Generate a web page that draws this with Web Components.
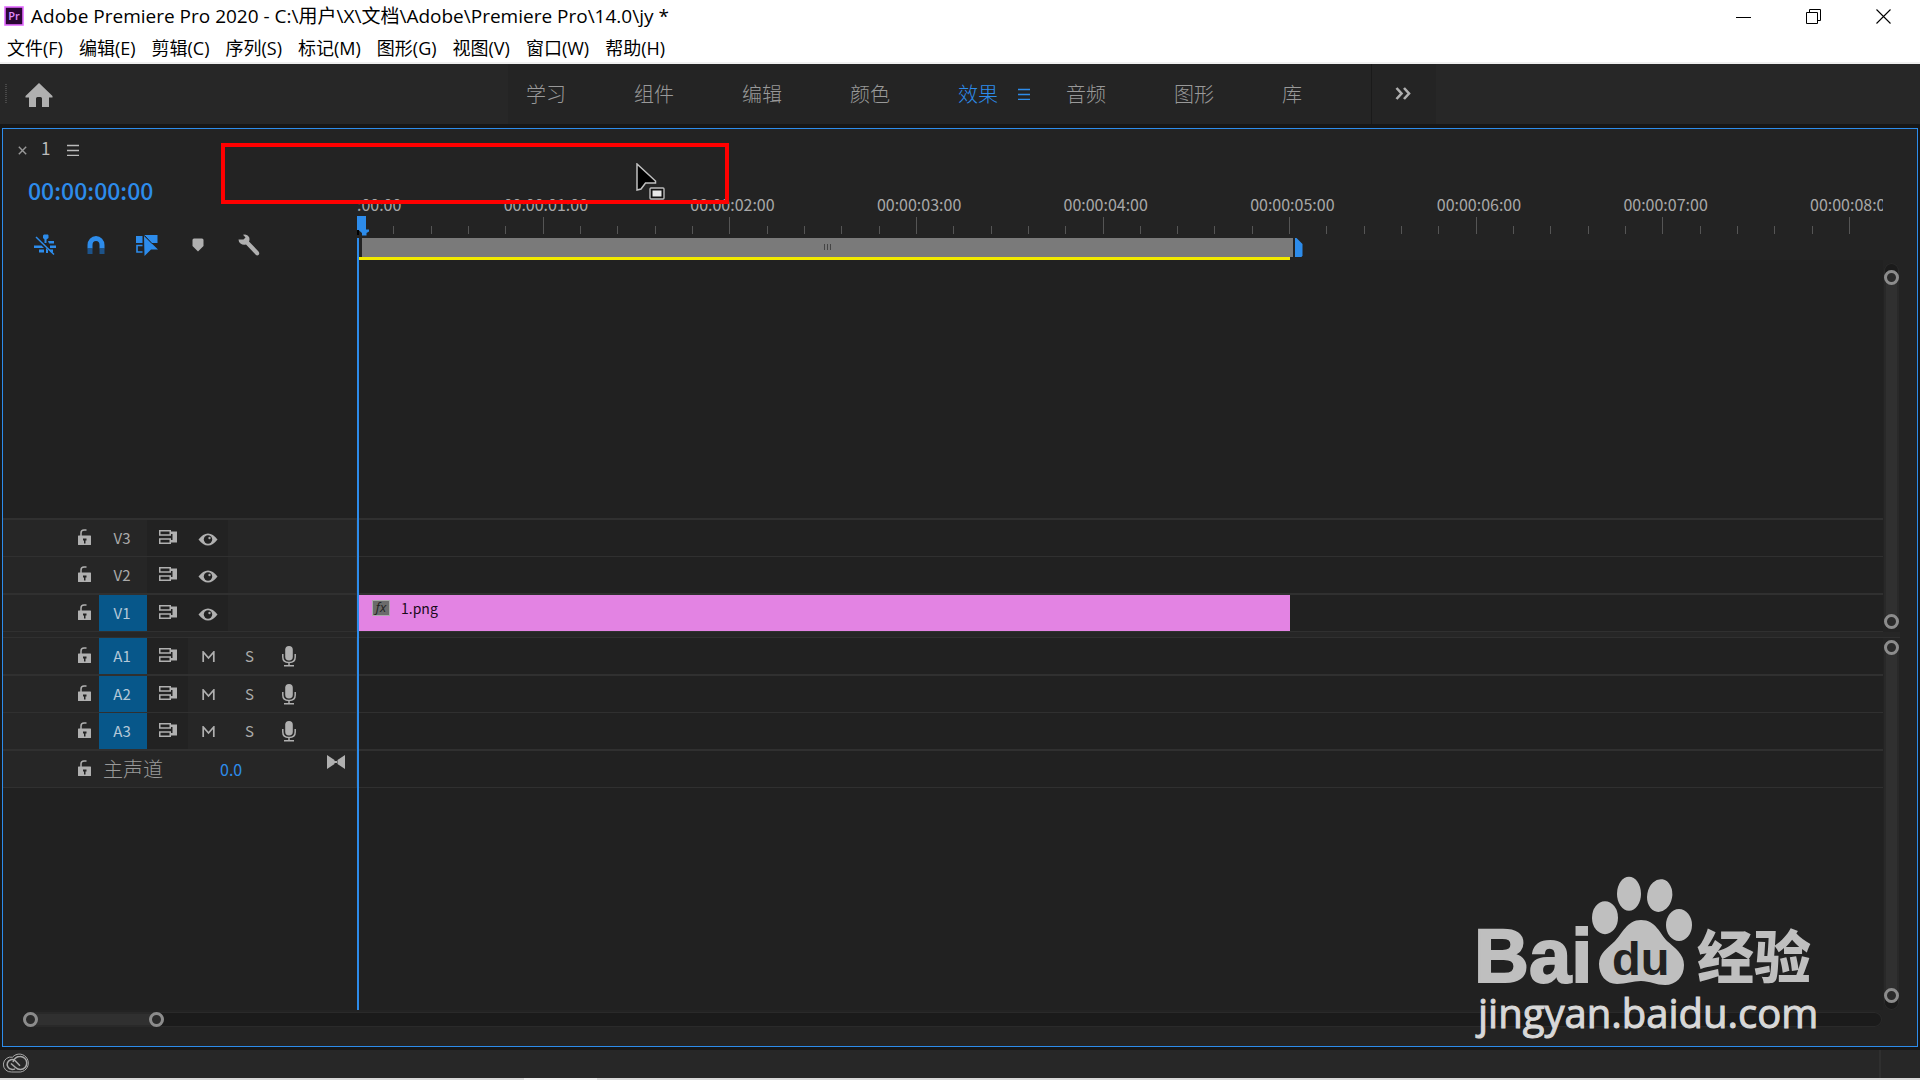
<!DOCTYPE html>
<html lang="zh-CN">
<head>
<meta charset="utf-8">
<title>Adobe Premiere Pro 2020</title>
<style>
html,body{margin:0;height:100%;background:#171717;overflow:hidden}
body{font-family:"Noto Sans CJK SC",sans-serif;color:#aaa}
</style>
</head>
<body>
<premiere-app></premiere-app>
<script>
const BASE = `<style>
*{box-sizing:border-box}
button{all:unset;box-sizing:border-box;cursor:default;white-space:nowrap}
svg{display:block}
</style>`;
function define(name, html, setup) {
  customElements.define(name, class extends HTMLElement {
    constructor() {
      super();
      this.attachShadow({mode: 'open'});
    }
    connectedCallback() {
      this.shadowRoot.innerHTML = BASE + (typeof html === 'function' ? html(this) : html);
      if (setup) setup(this);
    }
  });
}

/* Icons: [width, height, markup] */
const ICONS = {
  app: [20, 20, '<rect x="1" y="1" width="18" height="18" fill="#2a0634" stroke="#e36bff" stroke-width="1.6"/><text x="10" y="14" text-anchor="middle" font-family="Open Sans,sans-serif" font-weight="600" font-size="11" fill="#e08cff">Pr</text>'],
  min: [16, 16, '<path d="M0 8.500H15" stroke="#000"/>'],
  restore: [16, 16, '<path d="M.5 3.500H11.500V14.500H.500ZM3.500 3.500V.500H14.500V11.500H11.500" fill="none" stroke="#000"/>'],
  close: [16, 16, '<path d="M.5.500L14.500 14.500M14.500.500L.500 14.500" stroke="#000" stroke-width="1.100"/>'],
  home: [28, 24, '<path d="M14 0L27.500 13V14.500H24V24H17V15.500Q17 14 15.500 14H12.500Q11 14 11 15.500V24H4V14.500H.500V13Z" fill="#b0b0b0"/>'],
  more: [16, 13, '<path d="M1.500 1L6.500 6.500L1.500 12M9 1L14 6.500L9 12" fill="none" stroke="#b0b0b0" stroke-width="2.600"/>'],
  menu: [12, 12, '<path d="M0 1.500H12M0 6.500H12M0 11.500H12" stroke="currentColor" stroke-width="1.300"/>'],
  x: [9, 9, '<path d="M.8.800L8.200 8.200M8.200.800L.800 8.200" stroke="#999" stroke-width="1.400"/>'],
  nest: [22, 22, '<g fill="#2d8ceb"><path d="M9 1.500L10 .5H14L14.500 1.500V4L12.500 5.500V9H10.500V5.500L9 4ZM14 7H20V9.500H15ZM16 11.500H22V14H16ZM0 11.500H7.500L10 14H0ZM5 15.500H10V18.500H5ZM12 14L14 16V19H12Z"/><path d="M15 15.500H19V18.500H17Z"/></g><path d="M2 3L20 20.500" stroke="#2d8ceb" stroke-width="1.500"/>'],
  magnet: [18, 18, '<path d="M3 12.500V9A6 6.500 0 0 1 15 9V12.500" fill="none" stroke="#2d8ceb" stroke-width="5"/><path d="M.5 12.500H5.500V18H.500ZM12.500 12.500H17.500V18H12.500Z" fill="#1d5389"/>'],
  linked: [22, 21, '<path d="M0 1H6.500V8H0ZM8 0H21.500V8H15Z" fill="#2d8ceb"/><path d="M6.500 10.500H1V17H6.500" fill="none" stroke="#2d8ceb" stroke-width="1.600"/><path d="M8 1L22 14.500H15L8.500 21Z" fill="#2d8ceb"/><path d="M8.500.500L16 8.500" stroke="#222" stroke-width="1"/>'],
  marker: [12, 14, '<path d="M.5 2Q.500.500 2 .500H10Q11.500.500 11.500 2V8L6 13.500L.500 8Z" fill="#b0b0b0"/>'],
  wrench: [22, 22, '<path d="M5 .8Q9-.6 11 3Q12 5 11 7.500L20.500 17.500Q22 19.500 20.500 21Q19 22 17.500 20.500L8 10.500Q5 11.500 2.500 9.500Q.500 8 .5 5.500H5.500L7.500 3.500Z" fill="#b0b0b0"/>'],
  lock: [14, 16, '<path d="M3 7V4Q3 1 6 1H8.500" fill="none" stroke="#b0b0b0" stroke-width="1.500"/><rect x="0" y="6.500" width="13" height="9.500" rx=".6" fill="#b0b0b0"/><path d="M5 9.500H8.500V11.500H7.500V14.500H6V11.500H5Z" fill="#222"/>'],
  sync: [18, 14, '<path d="M.750.750H11.250V5H.750ZM.750 9H11.250V13.250H.750Z" fill="none" stroke="#b0b0b0" stroke-width="1.500"/><path d="M11.500 1.500H18V12.500H11.500V10H13.500V4H11.500Z" fill="#b0b0b0"/>'],
  eye: [20, 13, '<path d="M.5 6.500Q5 .5 10 .5T19.500 6.500Q15 12.500 10 12.500T.5 6.500Z" fill="#b0b0b0"/><circle cx="10" cy="6.500" r="4.200" fill="#222"/><circle cx="11.500" cy="5" r="1.200" fill="#aaa"/>'],
  mute: [13, 11, '<path d="M1.200 11V1L6.500 7L11.800 1V11" fill="none" stroke="#b0b0b0" stroke-width="1.700"/>'],
  mic: [14, 21, '<rect x="3.200" y="0" width="7.600" height="14.500" rx="3.800" fill="#b0b0b0"/><path d="M.8 8V11Q.800 16.500 7 16.500T13.200 11V8M7 16.500V19.500M2 19.800H12" fill="none" stroke="#b0b0b0" stroke-width="1.500"/>'],
  bowtie: [18, 14, '<path d="M0 0L7.500 5V9L0 14ZM18 0L10.500 5V9L18 14ZM7 6H11V8H7Z" fill="#b0b0b0"/>'],
  cc: [26, 20, '<g fill="none" stroke="#aaa"><path d="M8.500 19H17.500A9 9 0 1 0 9.500 4.200A7.500 7.500 0 1 0 8.500 19Z"/><path d="M12 15.800Q10 16.800 8.500 16.300A4.900 4.900 0 1 1 12 7.500L17 12.800M10 9Q12 3.500 17 3.500A6.500 6.500 0 0 1 17.500 16.500Q14.500 16.500 12.500 14.500L8 10.500" stroke-width="1.500"/></g>'],
  handleEnd: [8, 19, '<path d="M0 0H1.500L7.500 6V17.500L6.500 19H0Z" fill="#2d8ceb"/>'],
  playhead: [12, 20, '<path d="M0 0H9V13.500H12V15.500L9.500 17V19.500H5V17L1.500 14H0Z" fill="#2d8ceb"/><path d="M0 14H2V19H0Z" fill="#000"/>'],
  cursor: [32, 38, '<path d="M1 1V27L5 26L9.500 20H19.500V18Z" fill="#000" stroke="#c0c0c0" stroke-width="1.500"/><rect x="14" y="25" width="14" height="11" rx="1" fill="#111" stroke="#bbb" stroke-width="1.400"/><rect x="16.500" y="27.500" width="9" height="6" fill="#e8e8e8"/>']
};
define('pr-icon', el => {
  const [w, h, m] = ICONS[el.getAttribute('name')];
  return `<style>:host{display:block;flex:none}</style><svg width="${w}" height="${h}" viewBox="0 0 ${w} ${h}" aria-hidden="true">${m}</svg>`;
});

define('window-title', `<style>
:host{display:flex;height:34px;background:#fff;color:#000;font:19px/28px "Open Sans","Noto Sans CJK SC",sans-serif}
.name{flex:1;display:flex;align-items:center;gap:7px;padding:0 0 2px 4px}
.ctl{display:flex;padding-right:1px}
.ctl button{width:70px;display:flex;align-items:center;justify-content:center}
</style>
<div class="name"><pr-icon name="app"></pr-icon><span><slot></slot></span></div>
<div class="ctl"><button aria-label="最小化"><pr-icon name="min"></pr-icon></button><button aria-label="还原"><pr-icon name="restore"></pr-icon></button><button aria-label="关闭"><pr-icon name="close"></pr-icon></button></div>`);

define('menu-bar', `<style>
:host{display:block;background:#fff;color:#000;border-bottom:2px solid #f0f0f0;font:18px/28px "Open Sans","Noto Sans CJK SC",sans-serif}
nav{display:flex;gap:16px;height:28px;padding-left:7px}
</style><nav>${['文件(F)','编辑(E)','剪辑(C)','序列(S)','标记(M)','图形(G)','视图(V)','窗口(W)','帮助(H)'].map(t => `<button>${t}</button>`).join('')}</nav>`);

define('workspace-tab', el => `<style>
:host{display:flex;flex:none;width:108px;align-items:center}
button{width:60px;font-size:20px;line-height:28px;font-weight:300;color:#999}
:host([active]) button,:host([active]){color:#2d8ceb}
</style><button><slot></slot></button>${el.hasAttribute('active') ? '<pr-icon name="menu"></pr-icon>' : ''}`);

define('workspace-bar', `<style>
:host{display:flex;height:60px;background:#272727}
.left{width:508px;display:flex;align-items:center;gap:18px;padding-left:5px}
.grip{width:2px;height:20px;background:repeating-linear-gradient(#484848 0 1px,transparent 1px 2px)}
.left button{padding-top:2px}
.tabs{display:flex;width:864px;background:#242424;padding-left:18px;border-right:1px solid #1a1a1a}
.more{width:64px;padding:0 0 2px 23px;display:flex;align-items:center;background:#242424}
</style>
<div class="left"><span class="grip"></span><button aria-label="主页"><pr-icon name="home"></pr-icon></button></div>
<div class="tabs"><workspace-tab>学习</workspace-tab><workspace-tab>组件</workspace-tab><workspace-tab>编辑</workspace-tab><workspace-tab>颜色</workspace-tab><workspace-tab active>效果</workspace-tab><workspace-tab>音频</workspace-tab><workspace-tab>图形</workspace-tab><workspace-tab>库</workspace-tab></div>
<button class="more" aria-label="更多"><pr-icon name="more"></pr-icon></button>`);

define('timeline-tools', `<style>
:host{display:block;width:354px}
.tab{display:flex;align-items:center;height:38px;padding-left:15px;font-size:17px;line-height:24px;color:#bbb}
.tab .n{width:40px;padding-left:14px}
.tab pr-icon{padding-top:4px}
.time{display:flex;align-items:center;height:46px;padding-left:25px}
.time button{font-size:23px;line-height:32px;color:#2d8ceb;font-weight:500}
.tools{display:flex;height:47px;padding:17px 0 0 16px}
.tools button{width:51px;display:flex;align-items:center;justify-content:center}
</style>
<div class="tab"><button aria-label="关闭序列"><pr-icon name="x"></pr-icon></button><span class="n">1</span><button aria-label="序列菜单"><pr-icon name="menu"></pr-icon></button></div>
<div class="time"><button>00:00:00:00</button></div>
<div class="tools"><button aria-label="嵌套"><pr-icon name="nest"></pr-icon></button><button aria-label="对齐"><pr-icon name="magnet"></pr-icon></button><button aria-label="链接选择项"><pr-icon name="linked"></pr-icon></button><button aria-label="添加标记"><pr-icon name="marker"></pr-icon></button><button aria-label="时间轴显示设置"><pr-icon name="wrench"></pr-icon></button></div>`);

define('time-ruler', `<style>
:host{display:block;flex:1;min-width:0;padding-top:63px;overflow:hidden}
.segs{display:flex}
.seg{flex:none;width:12.23%}
.label{display:block;height:25px;font-size:16px;line-height:24px;color:#a8a8a8;margin-left:-40px;white-space:nowrap}
.ticks{display:flex;align-items:flex-end;height:17px;margin-left:-1px;margin-right:1px}
.ticks i{flex:1;height:8px;border-left:1px solid #555}
.ticks i:first-child{height:17px}
.work{display:flex;margin-top:4px;height:19px}
.bar{width:61%;margin-left:5px;background:#7a7a7a;display:flex;justify-content:center;align-items:center;padding-bottom:2px}
.grip{width:7px;height:6px;background:repeating-linear-gradient(90deg,#444 0 1px,transparent 1px 3px)}
.work pr-icon{margin-left:2px}
.render{height:3px;width:61%;margin-left:2px;background:#f2ea00}
</style>
<div class="segs">${[0,1,2,3,4,5,6,7,8].map(n => `<div class="seg"><span class="label">00:00:0${n}:00</span><div class="ticks"><i></i><i></i><i></i><i></i><i></i></div></div>`).join('')}</div>
<div class="work"><div class="bar"><span class="grip"></span></div><pr-icon name="handleEnd"></pr-icon></div>
<div class="render"></div>`);

define('timeline-track', el => {
  const type = el.getAttribute('type'), name = el.getAttribute('name');
  const sync = '<button class="c" aria-label="同步锁定"><pr-icon name="sync"></pr-icon></button>';
  const target = `<button class="target">${name}</button>`;
  const parts = {
    video: `${target}<div class="dark">${sync}<button class="c eye" aria-label="切换轨道输出"><pr-icon name="eye"></pr-icon></button></div>`,
    audio: `${target}<div class="dark">${sync}</div><button class="c" aria-label="静音"><pr-icon name="mute"></pr-icon></button><button class="c">S</button><button class="c mic" aria-label="画外音录制"><pr-icon name="mic"></pr-icon></button>`,
    master: `<span class="master">${name}</span><button class="vol">0.0</button><button class="tie" aria-label="轨道"><pr-icon name="bowtie"></pr-icon></button>`
  };
  return `<style>
:host{display:flex;height:37px;border-bottom:1px solid #303030}
:host([thick]){height:38px;border-bottom-width:2px}
.head{width:354px;display:flex;align-items:center;background:#262626;border-right:1px solid #2e2e2e;color:#aaa}
.lock{width:96px;padding-left:75px;padding-bottom:2px}
.target{width:48px;height:36px;text-align:center;font-size:15px;line-height:36px;padding-right:2px}
:host([on]) .target{background:#07578a;color:#b4c8d8}
.dark{display:flex;background:#222;height:36px;align-items:center}
.c{width:41px;display:flex;justify-content:center;font-size:15px;line-height:20px}
.dark .c{padding-bottom:2px}
.dark .eye{width:40px;padding:2px 0 0}
.mic{width:38px}
.master{width:121px;padding-left:4px;font-size:20px;line-height:30px;font-weight:300;color:#999}
.vol{width:107px;font-size:16px;line-height:24px;color:#2d8ceb}
.tie{padding-bottom:14px}
.lane{flex:1;min-width:0}
</style>
<div class="head"><button class="lock" aria-label="锁定轨道"><pr-icon name="lock"></pr-icon></button>${parts[type]}</div>
<div class="lane"><slot></slot></div>`;
});

define('timeline-clip', `<style>
:host{display:flex;height:36px;width:61%;margin-left:2px;background:#e383e3;color:#1a0a1a;gap:11px;padding:5px 0 0 13px}
.fx{width:18px;height:16px;background:#6b6b6b;border:1px solid #aaa;font:italic 13px/13px "Open Sans",sans-serif;text-align:center;color:#222}
.n{font-size:14px;line-height:16px}
</style><span class="fx">fx</span><span class="n"><slot></slot></span>`);

define('zoom-scroll', `<style>
:host{display:flex;flex-direction:column;width:15px;background:#1b1b1b;border-radius:8px;box-shadow:inset 0 0 0 1px #2a2a2a}
.thumb{flex:1;display:flex;flex-direction:column;justify-content:space-between;background:#303030;border:solid #292929;border-width:0 2px;border-radius:8px}
:host([horizontal]){flex-direction:row;width:auto;height:15px}
:host([horizontal]) .thumb{flex:none;width:141px;flex-direction:row;border-width:2px 0}
button{width:15px;height:15px;border:3px solid #8c8c8c;border-radius:50%;background:#2b2b2b;margin:0 -2px}
:host([horizontal]) button{margin:-2px 0}
</style><div class="thumb"><button aria-label="缩放起点"></button><button aria-label="缩放终点"></button></div>`);

define('timeline-panel', `<style>
:host{flex:1;min-height:0;display:flex;flex-direction:column;position:relative;margin:4px 2px 3px;border:1px solid #2d8ceb;background:#232323}
.top{display:flex;height:131px;padding-right:34px}
.zones{flex:1;display:flex;flex-direction:column;min-height:0}
.zone{flex:1;display:flex;min-height:0}
.tracks{flex:1;min-width:0;background:#212121}
.video .tracks{display:flex;flex-direction:column;justify-content:flex-end}
.first{border-top:2px solid #303030}
.divider{height:6px;background:#262626;border-bottom:1px solid #303030;margin-right:17px}
.side{width:34px;display:flex;padding-left:1px}
.video .side{padding-top:3px;padding-bottom:3px}
.video zoom-scroll{padding-top:7px}
.audio .side{padding-top:2px}
.audio zoom-scroll{padding-bottom:7px}
.bottom{height:36px;padding:2px 35px 0 20px}
.line,.head{position:absolute;left:354px;top:109px;bottom:36px;width:2px;background:#2d8ceb}
.head{top:87px;bottom:auto;width:12px;background:none}
.mark{position:absolute;left:218px;top:14px;width:508px;height:61px;border:4px solid #f00}
.cursor{position:absolute;left:633px;top:34px}
</style>
<div class="top"><timeline-tools></timeline-tools><time-ruler></time-ruler></div>
<div class="zones">
<div class="zone video"><div class="tracks"><div class="first"><timeline-track type="video" name="V3"></timeline-track><timeline-track type="video" name="V2" thick></timeline-track><timeline-track type="video" name="V1" on><timeline-clip>1.png</timeline-clip></timeline-track></div></div><div class="side"><zoom-scroll></zoom-scroll></div></div>
<div class="divider"></div>
<div class="zone audio"><div class="tracks"><timeline-track type="audio" name="A1" on thick></timeline-track><timeline-track type="audio" name="A2" on></timeline-track><timeline-track type="audio" name="A3" on thick></timeline-track><timeline-track type="master" name="主声道"></timeline-track></div><div class="side"><zoom-scroll></zoom-scroll></div></div>
</div>
<div class="bottom"><zoom-scroll horizontal></zoom-scroll></div>
<div class="line"></div><pr-icon class="head" name="playhead"></pr-icon>
<div class="mark"></div><pr-icon class="cursor" name="cursor"></pr-icon>`);

define('status-bar', `<style>
:host{display:block;background:#272727}
.row{display:flex;height:28px;padding:3px 39px 0 3px;justify-content:space-between}
i{width:2px;margin-top:-3px;background:#2f2f2f}
.edge{height:2px;background:linear-gradient(90deg,#dadada 27.3%,#f0f0f0 27.3% 31.1%,#dadada 31.1%)}
</style><div class="row"><pr-icon name="cc"></pr-icon><i></i></div><div class="edge"></div>`);

define('baidu-watermark', `<style>
:host{position:absolute;right:103px;bottom:36px;width:343px;pointer-events:none}
svg{overflow:visible}
</style>
<svg width="343" height="170" viewBox="1474 874 343 170" role="img" aria-label="Baidu" fill="#bfbfbf">
<text x="1474" y="982" font-family="Liberation Sans,sans-serif" font-weight="700" font-size="76" stroke="#bfbfbf" stroke-width="2">Bai</text>
<ellipse cx="1605" cy="917.700" rx="13" ry="16.500"/><ellipse cx="1629" cy="893.700" rx="12" ry="17"/><ellipse cx="1659.700" cy="895.600" rx="12.500" ry="16.500" transform="rotate(10 1659.700 895.600)"/><ellipse cx="1679" cy="925" rx="13" ry="16"/>
<path d="M1641 920C1656 920 1660 934 1667 941C1675 948 1684 954 1684 965C1684 977 1676 985 1665 985C1656 985 1650 981 1641 981C1633 981 1626 984 1617 984C1606 984 1599 975 1599 964C1599 953 1608 948 1615 941C1622 934 1627 920 1641 920Z"/>
<text x="1612" y="975" font-family="Liberation Sans,sans-serif" font-weight="700" font-size="47" fill="#222">du</text>
<text x="1697" y="978" font-family="Noto Sans CJK SC,sans-serif" font-weight="900" font-size="57">经验</text>
<text x="1478" y="1028" font-family="Open Sans,sans-serif" font-size="40" fill="#d8d8d8" stroke="#d8d8d8" stroke-width="1">jingyan.baidu.com</text>
</svg>`);

define('premiere-app', `<style>
:host{display:flex;flex-direction:column;height:100vh;position:relative;background:#171717}
</style>
<window-title>Adobe Premiere Pro 2020 - C:\\用户\\X\\文档\\Adobe\\Premiere Pro\\14.0\\jy *</window-title>
<menu-bar></menu-bar><workspace-bar></workspace-bar><timeline-panel></timeline-panel><status-bar></status-bar><baidu-watermark></baidu-watermark>`);
</script>
</body>
</html>
